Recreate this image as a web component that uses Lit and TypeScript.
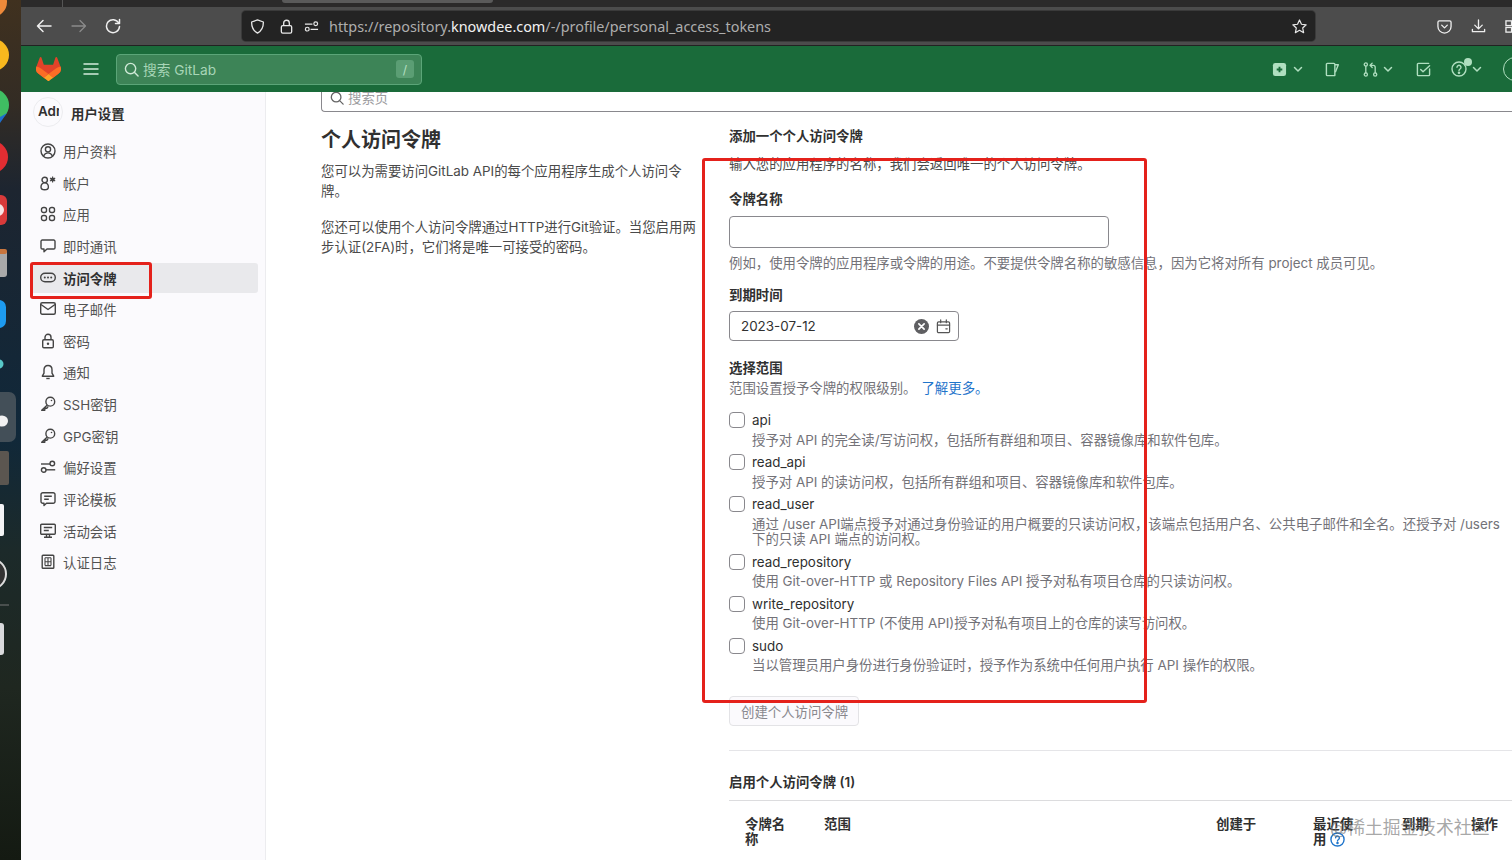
import { LitElement, html, css } from "lit";
import { customElement } from "lit/decorators.js";

const icons: Record<string, unknown> = {
  profile: html`<svg class="ic" viewBox="0 0 16 16" fill="none" stroke="currentColor" stroke-width="1.4"><circle cx="8" cy="8" r="7"/><circle cx="8" cy="6.3" r="2.6"/><path d="M3.6 13c.8-2 2.4-3.1 4.4-3.1s3.600 1.100 4.400 3.100"/></svg>`,
  account: html`<svg class="ic" viewBox="0 0 16 16" fill="none" stroke="currentColor" stroke-width="1.4"><circle cx="4.700" cy="4.900" r="2.700"/><path d="M1 12c0-2.200 1.600-4.200 3.700-4.200s3.700 2 3.700 4.200-1.600 2.800-3.700 2.800S1 14.200 1 12z"/><circle cx="12.600" cy="4.400" r="2" fill="currentColor" stroke="none"/><path d="M12.600 1.400v6M10 2.900l5.200 3M15.200 2.900l-5.200 3" stroke-width="1.100"/></svg>`,
  apps: html`<svg class="ic" viewBox="0 0 16 16" fill="none" stroke="currentColor" stroke-width="1.4"><rect x="1.500" y="1.500" width="5" height="5" rx="2"/><rect x="9.500" y="1.500" width="5" height="5" rx="2"/><rect x="1.500" y="9.500" width="5" height="5" rx="2"/><rect x="9.500" y="9.500" width="5" height="5" rx="2"/></svg>`,
  chat: html`<svg class="ic" viewBox="0 0 16 16" fill="none" stroke="currentColor" stroke-width="1.4" stroke-linejoin="round"><path d="M2.300 2h11.400A1.300 1.300 0 0 1 15 3.300v6.400a1.300 1.300 0 0 1-1.300 1.300H7l-3 2.800V11H2.300A1.300 1.300 0 0 1 1 9.700V3.300A1.300 1.300 0 0 1 2.300 2z"/></svg>`,
  token: html`<svg class="ic" viewBox="0 0 16 16" fill="none" stroke="currentColor" stroke-width="1.4"><rect x=".7" y="3.200" width="14.600" height="8.600" rx="4.300"/><circle cx="4.800" cy="7.500" r="1" fill="currentColor" stroke="none"/><circle cx="8" cy="7.500" r="1" fill="currentColor" stroke="none"/><circle cx="11.200" cy="7.500" r="1" fill="currentColor" stroke="none"/></svg>`,
  mail: html`<svg class="ic" viewBox="0 0 16 16" fill="none" stroke="currentColor" stroke-width="1.4" stroke-linejoin="round"><rect x=".7" y="1.700" width="14.600" height="11.600" rx="1.500"/><path d="M1 3.500l7 5 7-5"/></svg>`,
  lock: html`<svg class="ic" viewBox="0 0 16 16" fill="none" stroke="currentColor" stroke-width="1.4"><rect x="2.700" y="6.700" width="10.600" height="8" rx="1.200"/><path d="M5 6.700V4.300a3 3 0 0 1 6 0v2.400"/><circle cx="8" cy="10.700" r="1.200" fill="currentColor" stroke="none"/></svg>`,
  bell: html`<svg class="ic" viewBox="0 0 16 16" fill="none" stroke="currentColor" stroke-width="1.4" stroke-linejoin="round"><path d="M8 1.500c-2.600 0-4 1.900-4 4.300v3.400l-1.700 3h11.400l-1.700-3V5.800c0-2.400-1.400-4.300-4-4.300z"/><path d="M6.300 14.500h3.400"/></svg>`,
  key: html`<svg class="ic" viewBox="0 0 16 16" fill="none" stroke="currentColor" stroke-width="1.4" stroke-linejoin="round"><circle cx="10.300" cy="5.700" r="4.400"/><path d="M7.300 9L1.700 14.300h3.100v-2h2l1.500-1.900"/><circle cx="11.500" cy="4.500" r=".8" fill="currentColor" stroke="none"/></svg>`,
  prefs: html`<svg class="ic" viewBox="0 0 16 16" fill="none" stroke="currentColor" stroke-width="1.4"><circle cx="12.300" cy="4.500" r="2.300"/><path d="M1 5h9"/><circle cx="3.700" cy="11" r="2.300"/><path d="M6 10.800h9.200"/></svg>`,
  tpl: html`<svg class="ic" viewBox="0 0 16 16" fill="none" stroke="currentColor" stroke-width="1.400" stroke-linejoin="round"><path d="M2.800 1.700h10.400A1.800 1.800 0 0 1 15 3.500v7a1.800 1.800 0 0 1-1.800 1.800H6.500l-2.500 2.200V12.300H2.800A1.800 1.800 0 0 1 1 10.500v-7a1.800 1.800 0 0 1 1.800-1.800z"/><path d="M4.200 5.200h7.600M4.200 8.300h4.600"/></svg>`,
  monitor: html`<svg class="ic" viewBox="0 0 16 16" fill="none" stroke="currentColor" stroke-width="1.400"><rect x=".7" y="1.200" width="14.600" height="10" rx="1"/><path d="M3.800 4.500h8.400M3.800 7.500h5M6.500 11.200v3M9.500 11.200v3M4 14.300h8"/></svg>`,
  log: html`<svg class="ic" viewBox="0 0 16 16" fill="none" stroke="currentColor" stroke-width="1.400"><rect x="2.200" y="1.200" width="11.600" height="13" rx=".8"/><path d="M8 3.800v7.800M5 3.800h6M5 7.700h6M5 11.600h6M5 3.800v7.800M11 3.800v7.800" stroke-width="1.100"/></svg>`,
};

const nav = [
  ["profile", "用户资料"], ["account", "帐户"], ["apps", "应用"], ["chat", "即时通讯"],
  ["token", "访问令牌"], ["mail", "电子邮件"], ["lock", "密码"], ["bell", "通知"],
  ["key", "SSH密钥"], ["key", "GPG密钥"], ["prefs", "偏好设置"], ["tpl", "评论模板"],
  ["monitor", "活动会话"], ["log", "认证日志"],
];

const scopes = [
  ["api", "授予对 API 的完全读/写访问权，包括所有群组和项目、容器镜像库和软件包库。"],
  ["read_api", "授予对 API 的读访问权，包括所有群组和项目、容器镜像库和软件包库。"],
  ["read_user", "通过 /user API端点授予对通过身份验证的用户概要的只读访问权，该端点包括用户名、公共电子邮件和全名。还授予对 /users 下的只读 API 端点的访问权。"],
  ["read_repository", "使用 Git-over-HTTP 或 Repository Files API 授予对私有项目仓库的只读访问权。"],
  ["write_repository", "使用 Git-over-HTTP (不使用 API)授予对私有项目上的仓库的读写访问权。"],
  ["sudo", "当以管理员用户身份进行身份验证时，授予作为系统中任何用户执行 API 操作的权限。"],
];

const chev = (cls: string) => html`<svg class="chev ${cls}" viewBox="0 0 10 10" fill="none" stroke="currentColor" stroke-width="1.500" stroke-linecap="round" stroke-linejoin="round"><path d="M1.500 3.500L5 7l3.500-3.500"/></svg>`;

@customElement("app-root")
export class AppRoot extends LitElement {
  static styles = css`
    :host { display: block; width: 1512px; height: 860px; overflow: hidden; position: relative;
      font-family: Inter, "Noto Sans CJK SC", sans-serif; font-size: 13.4px; color: #303030; background: #fff; }
    * { box-sizing: border-box; }
    .shell { display: flex; width: 1512px; height: 860px; }
    .dock { width: 21px; height: 860px; flex: none; display: block; }
    .win { width: 1491px; height: 860px; display: flex; flex-direction: column; overflow: hidden; }

    .strip { height: 7px; background: #2b2a2a; display: flex; flex: none; }
    .strip .sep { width: 1px; height: 7px; background: #555; margin-left: 41px; }
    .strip .tab { width: 211px; height: 3px; background: #5a5a5a; margin-left: 219px; border-radius: 0 0 3px 3px; }
    .bar { height: 39px; flex: none; background: #4c4c4c; border-bottom: 1px solid #222; display: flex; align-items: center; padding-left: 15px; color: #f0f0f0; }
    .navb { display: flex; gap: 18.500px; width: 206px; flex: none; }
    .navb svg { width: 16px; height: 16px; display: block; }
    .navb .off { color: #8a8a8a; }
    .url { width: 1073px; height: 30px; flex: none; background: #232323; border-radius: 4px; box-shadow: 0 0 0 1px #3a3a3a; display: flex; align-items: center; padding: 0 8px 0 8px; color: #e8e8e8; }
    .url svg { width: 15px; height: 15px; display: block; flex: none; }
    .url .s1 { margin-right: 14px; }
    .url .s2 { margin-right: 10px; }
    .url .s3 { margin-right: 10px; }
    .addr { font-family: "Noto Sans", sans-serif; font-size: 14.400px; color: #aeaeae; flex: 1; white-space: nowrap; }
    .addr b { font-weight: 400; color: #f2f2f2; }
    .tools { display: flex; gap: 19px; margin-left: 122px; color: #eee; }
    .tools svg { width: 15px; height: 15px; display: block; flex: none; }

    .gl { height: 46px; flex: none; background: #1a6b3a; display: flex; align-items: center; color: #b0dfc0; }
    .logo { width: 25px; height: 24px; margin-left: 15px; flex: none; display: block; }
    .burger { width: 16px; height: 16px; margin-left: 22px; flex: none; display: block; color: #d3ecdb; }
    .gs { width: 306px; height: 31px; margin-left: 17px; flex: none; background: #3d8457; border: 1px solid #5ba578; border-radius: 4px; display: flex; align-items: center; padding: 0 7px 0 7px; color: #a8d6b7; font-size: 13.700px; }
    .gs svg { width: 15px; height: 15px; margin-right: 4px; color: #cfe9d7; flex: none; }
    .gs span { flex: 1; }
    .kbd { width: 18px; height: 18px; background: #5b9e74; border-radius: 3px; display: flex; align-items: center; justify-content: center; font-size: 12px; color: #b5e0c3; flex: none; }
    .gr { display: flex; align-items: center; margin-left: 850px; flex: none; }
    .hi { width: 15px; height: 15px; display: block; flex: none; }
    .chev { width: 10px; height: 10px; display: block; flex: none; }
    .c1 { margin-left: 6px; }
    .c2 { margin-left: 5px; }
    .ml22 { margin-left: 22px; }
    .ml23 { margin-left: 23px; }
    .help { position: relative; display: block; flex: none; width: 16px; height: 16px; margin-left: 20px; }
    .help .hi { width: 16px; height: 16px; }
    .help i { position: absolute; width: 8px; height: 8px; border-radius: 50%; background: #b0dfc0; right: -5px; top: -3px; }
    .ava { width: 24px; height: 24px; border-radius: 50%; border: 1px solid #b0dfc0; margin-left: 21px; flex: none; }

    .body { display: flex; flex: 1; min-height: 0; }
    .side { width: 245px; flex: none; background: #fbfafd; border-right: 1px solid #ececef; }
    .shead { display: flex; align-items: flex-start; padding: 5px 0 0 12px; height: 44px; }
    .avatar { width: 30px; height: 30px; border-radius: 50%; background: #fbfafd; border: 1px solid #ececef; flex: none; padding-left: 4px; }
    .avatar span { display: block; width: 21px; overflow: hidden; font-weight: 600; font-size: 13.400px; line-height: 26px; white-space: nowrap; color: #303030; }
    .stitle { margin: 7px 0 0 8px; font-weight: 600; color: #303030; line-height: 20px; }
    .items { display: grid; row-gap: 1.650px; margin: 0 7px 0 10px; }
    .item { height: 30px; display: flex; align-items: center; padding-left: 9px; gap: 7px; color: #525252; border-radius: 3px; white-space: nowrap; }
    .item.on { background: #e9e9ec; color: #303030; font-weight: 600; }
    .ic { width: 16px; height: 16px; flex: none; display: block; color: #444; }

    .main { flex: 1; min-width: 0; padding-left: 55px; overflow: hidden; }
    .psearch { height: 20px; border: 1px solid #89888d; border-top: none; border-right: none; border-radius: 0 0 0 4px; display: flex; align-items: flex-start; padding-left: 8px; color: #9b9b9e; overflow: hidden; }
    .psearch svg { width: 14px; height: 14px; margin: -1px 4px 0 0; color: #666; flex: none; }
    .psearch span { line-height: 13px; }
    .cols { display: flex; margin-top: 14px; }
    .left { width: 378px; flex: none; }
    .left h1 { margin: 0; font-size: 20px; font-weight: 600; line-height: 28px; color: #303030; }
    .left p { margin: 7px 0 15px; line-height: 20.400px; color: #4a4a4a; }
    .right { width: 783px; margin-left: 30px; flex: none; }
    .lbl { font-weight: 600; line-height: 20px; color: #303030; }
    .muted { color: #737278; line-height: 20px; }
    .m8 { margin-top: 8px; color: #4a4a4a; }
    .m15 { margin-top: 15px; }
    .inp { display: block; width: 380px; height: 32px; margin-top: 7px; border: 1px solid #89888d; border-radius: 4px; background: #fff; }
    .m5 { margin-top: 5px; }
    .m12 { margin-top: 12px; }
    .date { width: 230px; height: 30px; margin-top: 6px; border: 1px solid #89888d; border-radius: 4px; display: flex; align-items: center; padding: 0 7px 0 11px; color: #303030; }
    .date span { flex: 1; }
    .date svg { width: 15px; height: 15px; display: block; flex: none; }
    .date .cal { margin-left: 7px; color: #555; }
    .m17 { margin-top: 17px; }
    a { color: #1f75cb; text-decoration: none; margin-left: 5px; }
    .scopes { margin-top: 12px; }
    .scope { display: flex; gap: 7px; padding-bottom: 4px; }
    .scope input { appearance: none; width: 16px; height: 16px; margin: 2px 0 0; flex: none; border: 1px solid #89888d; border-radius: 4px; background: #fff; }
    .scope .t { line-height: 20px; color: #303030; }
    .scope .d { margin-top: 2.500px; line-height: 15.500px; color: #737278; padding-right: 8px; }
    .btn { width: 130px; height: 30px; margin-top: 18px; border: 1px solid #e3e3e6; border-radius: 4px; background: #fbfafd; color: #89888d; display: flex; align-items: center; padding-left: 11px; white-space: nowrap; }
    .hr { height: 1px; background: #e5e5e8; margin-top: 24px; }
    .h2 { margin-top: 21px; font-weight: 600; line-height: 21px; color: #303030; }
    .hr2 { height: 1px; background: #dcdcde; margin-top: 7px; }
    .thead { display: grid; grid-template-columns: 79px 392px 97px 89px 69px 41px; padding: 16px 0 0 16px; font-weight: 600; line-height: 15px; color: #303030; }
    .th1 { width: 50px; }
    .th4 { width: 46px; }
    .q { display: inline-block; width: 15px; height: 15px; vertical-align: -3px; margin-left: 4px; color: #1f75cb; }

    .mark { position: absolute; border: 3px solid #e4211b; border-radius: 3px; pointer-events: none; }
    .mark1 { left: 30px; top: 262px; width: 122px; height: 37px; }
    .mark2 { left: 702px; top: 158px; width: 445px; height: 545px; }
    .wm { position: absolute; left: 1330px; top: 815px; font-size: 17.800px; line-height: 26px; color: rgba(110,110,110,.62); white-space: nowrap; pointer-events: none; }
  `;

  render() {
    return html`
      <div class="shell">
        <svg class="dock" viewBox="0 0 21 860" preserveAspectRatio="none">
          <defs>
            <linearGradient id="bg" x1="0" y1="0" x2="0" y2="1">
              <stop offset="0" stop-color="#40311f"/><stop offset=".12" stop-color="#332c24"/>
              <stop offset=".22" stop-color="#1d2530"/><stop offset=".5" stop-color="#10283a"/>
              <stop offset=".64" stop-color="#1c2a2a"/><stop offset=".8" stop-color="#1f2720"/><stop offset="1" stop-color="#141a12"/>
            </linearGradient>
          </defs>
          <rect width="21" height="860" fill="url(#bg)"/>
          <circle cx="-8" cy="2" r="15" fill="#ee8a3a"/>
          <circle cx="-7" cy="55" r="16" fill="#f8b81e"/>
          <circle cx="-7" cy="105" r="16" fill="#3fbe62"/>
          <path d="M0 117l7-4-7 10z" fill="#1d6fd0"/>
          <circle cx="-8" cy="157" r="16" fill="#e22d32"/>
          <rect x="-24" y="195" width="31" height="30" rx="6" fill="#d93a3a"/>
          <circle cx="-2" cy="210" r="6" fill="#f6e5e5"/>
          <rect x="-24" y="250" width="31" height="27" rx="3" fill="#a9a9a9"/>
          <rect x="-24" y="249" width="31" height="5" rx="2" fill="#c9763e"/>
          <rect x="-24" y="300" width="30" height="28" rx="7" fill="#1d9bf0"/>
          <circle cx="-1" cy="364" r="4.500" fill="#58c9c9"/>
          <rect x="-20" y="392" width="36" height="50" rx="7" fill="#434f58"/>
          <ellipse cx="2" cy="421" rx="6" ry="5.500" fill="#f2f2f2"/>
          <rect x="-20" y="451" width="29" height="34" rx="2" fill="#5b5650"/>
          <rect x="-20" y="504" width="24" height="32" rx="2" fill="#f4f4f6"/>
          <circle cx="-9" cy="574" r="15" fill="#333" stroke="#ddd" stroke-width="2"/>
          <path d="M0 605h9" stroke="#777" stroke-width="1"/>
          <rect x="-20" y="623" width="24" height="32" rx="3" fill="#d9d9dc"/>
        </svg>
        <div class="win">
          <div class="strip"><div class="sep"></div><div class="tab"></div></div>
          <div class="bar">
            <div class="navb">
              <svg viewBox="0 0 16 16" fill="none" stroke="currentColor" stroke-width="1.500" stroke-linecap="round" stroke-linejoin="round"><path d="M15 8H1.500M7 2.500L1.500 8 7 13.500"/></svg>
              <svg class="off" viewBox="0 0 16 16" fill="none" stroke="currentColor" stroke-width="1.300" stroke-linecap="round" stroke-linejoin="round"><path d="M1 8h13.500M9 2.500L14.500 8 9 13.500"/></svg>
              <svg viewBox="0 0 16 16" fill="none" stroke="currentColor" stroke-width="1.500" stroke-linecap="round" stroke-linejoin="round"><path d="M13.700 5A6.500 6.500 0 1 0 14.500 8.500"/><path d="M14.500 1.500v4h-4"/></svg>
            </div>
            <div class="url">
              <svg class="s1" viewBox="0 0 16 16" fill="none" stroke="currentColor" stroke-width="1.400" stroke-linejoin="round"><path d="M8 1l6.300 2.200c0 5.800-1.800 9.500-6.300 11.800C3.500 12.700 1.700 9 1.700 3.200z"/></svg>
              <svg class="s2" viewBox="0 0 16 16" fill="none" stroke="currentColor" stroke-width="1.400"><rect x="2.500" y="7" width="11" height="8" rx="1.500"/><path d="M5 7V4.300a3 3 0 0 1 6 0V7"/></svg>
              <svg class="s3" viewBox="0 0 16 16" fill="none" stroke="currentColor" stroke-width="1.300"><path d="M1 5.500h8M7 11h8"/><circle cx="12.500" cy="5" r="2"/><circle cx="3.500" cy="10.800" r="2"/></svg>
              <div class="addr">https://repository.<b>knowdee.com</b>/-/profile/personal_access_tokens</div>
              <svg viewBox="0 0 16 16" fill="none" stroke="currentColor" stroke-width="1.300" stroke-linejoin="round"><path d="M8 1l2.100 4.600 5 .6-3.700 3.400 1 5L8 12.100l-4.400 2.500 1-5L.9 6.200l5-.6z"/></svg>
            </div>
            <div class="tools">
              <svg viewBox="0 0 16 16" fill="none" stroke="currentColor" stroke-width="1.400" stroke-linecap="round" stroke-linejoin="round"><path d="M2.500 2h11A1.500 1.500 0 0 1 15 3.500V8A7 7 0 0 1 1 8V3.500A1.500 1.500 0 0 1 2.500 2z"/><path d="M5 6.500L8 9.500l3-3"/></svg>
              <svg viewBox="0 0 16 16" fill="none" stroke="currentColor" stroke-width="1.400" stroke-linecap="round" stroke-linejoin="round"><path d="M8 1v9M4 6.500L8 10.500l4-4M1.500 11v2.500h13V11"/></svg>
              <svg viewBox="0 0 16 16" fill="none" stroke="currentColor" stroke-width="1.400"><rect x="1" y="2" width="6" height="5"/><rect x="1" y="9" width="6" height="5"/></svg>
            </div>
          </div>
          <div class="gl">
            <svg class="logo" viewBox="0 0 25 24">
              <path d="m24.507 9.5-.034-.09L21.082.562a.896.896 0 0 0-1.694.091l-2.29 7.01H7.825L5.535.653a.898.898 0 0 0-1.694-.09L.451 9.411.416 9.5a6.297 6.297 0 0 0 2.09 7.278l.012.01.03.022 5.16 3.867 2.56 1.935 1.554 1.176a1.051 1.051 0 0 0 1.268 0l1.555-1.176 2.56-1.935 5.197-3.89.014-.01A6.297 6.297 0 0 0 24.507 9.5Z" fill="#E24329"/>
              <path d="m24.507 9.5-.034-.09a11.44 11.44 0 0 0-4.56 2.051l-7.447 5.632 4.742 3.584 5.197-3.89.014-.01A6.297 6.297 0 0 0 24.507 9.5Z" fill="#FC6D26"/>
              <path d="m7.707 20.677 2.56 1.935 1.555 1.176a1.051 1.051 0 0 0 1.268 0l1.555-1.176 2.56-1.935-4.743-3.584-4.755 3.584Z" fill="#FCA326"/>
              <path d="M5.010 11.461a11.430 11.430 0 0 0-4.560-2.050L.416 9.500a6.297 6.297 0 0 0 2.090 7.278l.012.010.030.022 5.160 3.867 4.745-3.584-7.444-5.632Z" fill="#FC6D26"/>
            </svg>
            <svg class="burger" viewBox="0 0 16 16" fill="none" stroke="currentColor" stroke-width="1.500" stroke-linecap="round"><path d="M1 3h14M1 8h14M1 13h14"/></svg>
            <div class="gs">
              <svg viewBox="0 0 16 16" fill="none" stroke="currentColor" stroke-width="1.500" stroke-linecap="round"><circle cx="7" cy="7" r="5.500"/><path d="M11 11l4 4"/></svg>
              <span>搜索 GitLab</span><div class="kbd">/</div>
            </div>
            <div class="gr">
              <svg class="hi" viewBox="0 0 16 16"><rect x="1" y="1" width="14" height="14" rx="2.500" fill="currentColor"/><path d="M8 5v6M5 8h6" stroke="#1a6b3a" stroke-width="2"/></svg>
              ${chev("c1")}
              <svg class="hi ml22" viewBox="0 0 16 16" fill="none" stroke="currentColor" stroke-width="1.500" stroke-linejoin="round"><path d="M2.500 1.500h7a1 1 0 0 1 1 1v12h-8a1 1 0 0 1-1-1v-11a1 1 0 0 1 1-1z"/><path d="M10.500 3h3.700L11 11"/></svg>
              <svg class="hi ml23" viewBox="0 0 16 16" fill="none" stroke="currentColor" stroke-width="1.400" stroke-linecap="round" stroke-linejoin="round"><circle cx="3" cy="2.700" r="1.700"/><circle cx="3" cy="13.300" r="1.700"/><circle cx="13" cy="13.300" r="1.700"/><path d="M3 4.400v7.200M13 11.600V5.500a2 2 0 0 0-2-2H8M9.800 1.200L7.500 3.500l2.300 2.300"/></svg>
              ${chev("c2")}
              <svg class="hi ml23" viewBox="0 0 16 16" fill="none" stroke="currentColor" stroke-width="1.500" stroke-linecap="round" stroke-linejoin="round"><path d="M14.500 7.500v6a1 1 0 0 1-1 1h-11a1 1 0 0 1-1-1v-11a1 1 0 0 1 1-1h11"/><path d="M5 8l2.500 2.500L14.500 4"/></svg>
              <div class="help">
                <svg class="hi" viewBox="0 0 16 16" fill="none" stroke="currentColor" stroke-width="1.400" stroke-linecap="round"><circle cx="8" cy="8" r="7"/><path d="M6 6.200a2 2 0 1 1 3 1.800c-.7.400-1 .8-1 1.600"/><circle cx="8" cy="11.800" r=".6" fill="currentColor"/></svg>
                <i></i>
              </div>
              ${chev("c2")}
              <div class="ava"></div>
            </div>
          </div>
          <div class="body">
            <aside class="side">
              <div class="shead"><div class="avatar"><span>Adm</span></div><div class="stitle">用户设置</div></div>
              <div class="items">
                ${nav.map(([ic, t]) => html`<div class="item ${t === "访问令牌" ? "on" : ""}">${icons[ic]}<span>${t}</span></div>`)}
              </div>
            </aside>
            <main class="main">
              <div class="psearch">
                <svg viewBox="0 0 16 16" fill="none" stroke="currentColor" stroke-width="1.500" stroke-linecap="round"><circle cx="7" cy="7" r="5.500"/><path d="M11 11l4 4"/></svg>
                <span>搜索页</span>
              </div>
              <div class="cols">
                <div class="left">
                  <h1>个人访问令牌</h1>
                  <p>您可以为需要访问GitLab API的每个应用程序生成个人访问令牌。</p>
                  <p>您还可以使用个人访问令牌通过HTTP进行Git验证。当您启用两步认证(2FA)时，它们将是唯一可接受的密码。</p>
                </div>
                <div class="right">
                  <div class="lbl">添加一个个人访问令牌</div>
                  <div class="muted m8">输入您的应用程序的名称，我们会返回唯一的个人访问令牌。</div>
                  <div class="lbl m15">令牌名称</div>
                  <input class="inp" type="text" />
                  <div class="muted m5">例如，使用令牌的应用程序或令牌的用途。不要提供令牌名称的敏感信息，因为它将对所有 project 成员可见。</div>
                  <div class="lbl m12">到期时间</div>
                  <div class="date">
                    <span>2023-07-12</span>
                    <svg viewBox="0 0 16 16"><circle cx="8" cy="8" r="8" fill="#5f5f62"/><path d="M5.200 5.200l5.600 5.600M10.800 5.200l-5.600 5.600" stroke="#fff" stroke-width="1.800" stroke-linecap="round"/></svg>
                    <svg class="cal" viewBox="0 0 16 16" fill="none" stroke="currentColor" stroke-width="1.300" stroke-linecap="round"><rect x="1.500" y="3" width="13" height="11.500" rx="1.300"/><path d="M1.500 6.500h13M5 1v3M11 1v3M10.500 10.500h1.500"/></svg>
                  </div>
                  <div class="lbl m17">选择范围</div>
                  <div class="muted">范围设置授予令牌的权限级别。<a>了解更多。</a></div>
                  <div class="scopes">
                    ${scopes.map(([t, d]) => html`<label class="scope"><input type="checkbox" /><div><div class="t">${t}</div><div class="d">${d}</div></div></label>`)}
                  </div>
                  <div class="btn">创建个人访问令牌</div>
                  <div class="hr"></div>
                  <div class="h2">启用个人访问令牌 (1)</div>
                  <div class="hr2"></div>
                  <div class="thead">
                    <div class="th1">令牌名称</div>
                    <div>范围</div>
                    <div>创建于</div>
                    <div class="th4">最近使用<svg class="q" viewBox="0 0 16 16" fill="none" stroke="currentColor" stroke-width="1.500" stroke-linecap="round"><circle cx="8" cy="8" r="7"/><path d="M6 6.200a2 2 0 1 1 3 1.800c-.7.400-1 .8-1 1.600"/><circle cx="8" cy="11.800" r=".6" fill="currentColor"/></svg></div>
                    <div>到期</div>
                    <div>操作</div>
                  </div>
                </div>
              </div>
            </main>
          </div>
        </div>
      </div>
      <div class="mark mark1"></div>
      <div class="mark mark2"></div>
      <div class="wm">@稀土掘金技术社区</div>
    `;
  }
}
